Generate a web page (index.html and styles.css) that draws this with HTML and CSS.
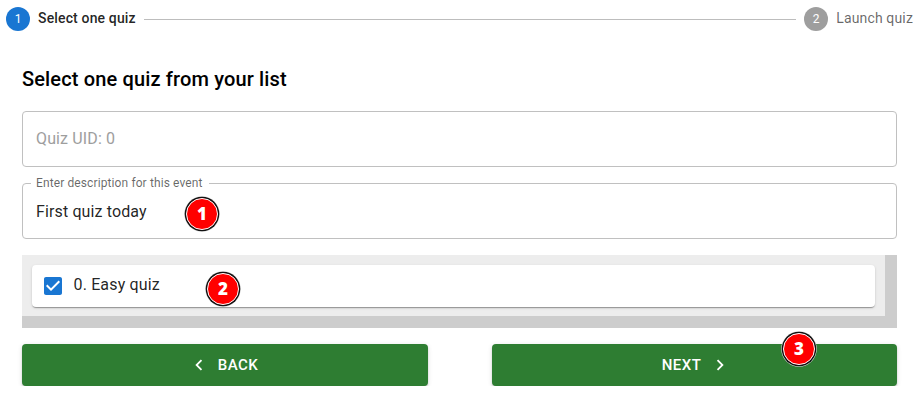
FILE: index.html
```html
<!DOCTYPE html>
<html lang="en">
<head>
<meta charset="utf-8">
<title>Launch quiz</title>
<link rel="stylesheet" href="styles.css">
</head>
<body>
<header class="stepper">
  <div class="step active"><span class="step-icon">1</span><span class="step-label">Select one quiz</span></div>
  <div class="connector"></div>
  <div class="step"><span class="step-icon">2</span><span class="step-label">Launch quiz</span></div>
</header>
<main>
  <h1>Select one quiz from your list</h1>
  <div class="field disabled">Quiz UID: 0</div>
  <div class="field">
    <span class="field-label">Enter description for this event</span>
    First quiz today
    <span class="badge badge-one">1</span>
  </div>
  <div class="list">
    <div class="list-view">
      <div class="card">
        <svg class="checkbox" viewBox="3 3 18 18"><path fill="#1976d2" d="M19 3H5c-1.11 0-2 .9-2 2v14c0 1.1.89 2 2 2h14c1.11 0 2-.9 2-2V5c0-1.1-.89-2-2-2zm-9 14l-5-5 1.41-1.41L10 14.17l7.59-7.59L19 8l-9 9z"/></svg>
        <span class="card-text">0. Easy quiz</span>
        <span class="badge badge-two">2</span>
      </div>
    </div>
  </div>
  <div class="actions">
    <button class="back"><svg viewBox="0 0 24 24"><path d="M15.41 7.41L14 6l-6 6 6 6 1.41-1.41L10.83 12z"/></svg>Back</button>
    <button class="next">Next<svg viewBox="0 0 24 24"><path d="M10 6L8.59 7.41 13.17 12l-4.58 4.59L10 18l6-6z"/></svg><span class="badge badge-three">3</span></button>
  </div>
</main>
</body>
</html>
```
FILE: styles.css
```css
* { box-sizing: border-box; }
body {
  margin: 0;
  background: #fff;
  color: rgba(0, 0, 0, .87);
  font-family: Roboto, sans-serif;
  font-size: 16px;
}
.stepper {
  display: flex;
  align-items: center;
  height: 38px;
  padding: 0 11px 0 6px;
}
.step {
  display: flex;
  align-items: center;
  gap: 8px;
  color: rgba(0, 0, 0, .6);
  font-size: 14px;
  line-height: 20px;
  letter-spacing: .15px;
}
.step-icon {
  display: grid;
  place-items: center;
  width: 24px;
  height: 24px;
  border-radius: 50%;
  background: #9e9e9e;
  color: #fff;
  font-size: 12px;
  letter-spacing: 0;
}
.step-label { margin-top: -2px; }
.active { color: rgba(0, 0, 0, .87); font-weight: 500; }
.active .step-icon { background: #1976d2; font-weight: 400; }
.connector {
  flex: 1;
  height: 1px;
  margin: 1px 8px 0;
  background: #bdbdbd;
}
main { padding: 25px 27px 0 22px; }
h1 {
  margin: 0 0 16px;
  color: #000;
  font-size: 20px;
  font-weight: 500;
  line-height: 32px;
  letter-spacing: .15px;
}
.field {
  position: relative;
  display: flex;
  align-items: center;
  height: 56px;
  margin-bottom: 16px;
  padding: 0 13px;
  border: 1px solid #c0c0c0;
  border-radius: 4px;
  letter-spacing: .13px;
}
.disabled { color: #9e9e9e; padding-bottom: 2px; }
.field-label {
  position: absolute;
  top: -8px;
  left: 8px;
  padding: 0 6px 0 5px;
  background: #fff;
  color: rgba(0, 0, 0, .6);
  font-size: 12px;
  line-height: 15px;
  letter-spacing: .11px;
}
.list {
  height: 73px;
  margin-bottom: 16px;
  padding: 0 12px 12px 0;
  background: #cdcdcd;
}
.list-view {
  height: 61px;
  padding: 10px;
  background: #ededed;
}
.card {
  position: relative;
  display: flex;
  align-items: center;
  height: 42px;
  padding-left: 12px;
  border-radius: 4px;
  background: #fff;
  box-shadow: 0 2px 1px -1px rgba(0, 0, 0, .2), 0 1px 1px rgba(0, 0, 0, .14), 0 1px 3px rgba(0, 0, 0, .12);
}
.checkbox { width: 18px; height: 18px; }
.card-text {
  margin: -3px 0 0 11.5px;
  letter-spacing: .15px;
}
.actions {
  display: grid;
  grid-template-columns: 406px 405px;
  justify-content: space-between;
}
button {
  position: relative;
  display: flex;
  align-items: center;
  justify-content: center;
  gap: 8px;
  height: 42px;
  padding: 0;
  border: 0;
  border-radius: 4px;
  background: #2e7d32;
  color: #fff;
  font: 500 15px/26px Roboto, sans-serif;
  letter-spacing: .46px;
  text-transform: uppercase;
  box-shadow: 0 3px 1px -2px rgba(0, 0, 0, .2), 0 2px 2px rgba(0, 0, 0, .14), 0 1px 5px rgba(0, 0, 0, .12);
}
button svg { width: 22px; height: 22px; fill: #fff; }
.back svg { margin-left: -4px; }
.next svg { margin-right: -4px; }
.badge {
  position: absolute;
  display: grid;
  place-items: center;
  width: 32px;
  height: 32px;
  border: 1px solid #fff;
  border-radius: 50%;
  background: #f00;
  box-shadow: 0 0 0 1.3px #111, 0 0 0 1.8px #ddd;
  color: #fff;
  font: 800 17px/20px "Open Sans", sans-serif;
  letter-spacing: 0;
}
.badge-one { left: 163px; top: 14px; }
.badge-two { left: 175px; top: 8px; }
.badge-three { left: 291px; top: -11px; }
```
